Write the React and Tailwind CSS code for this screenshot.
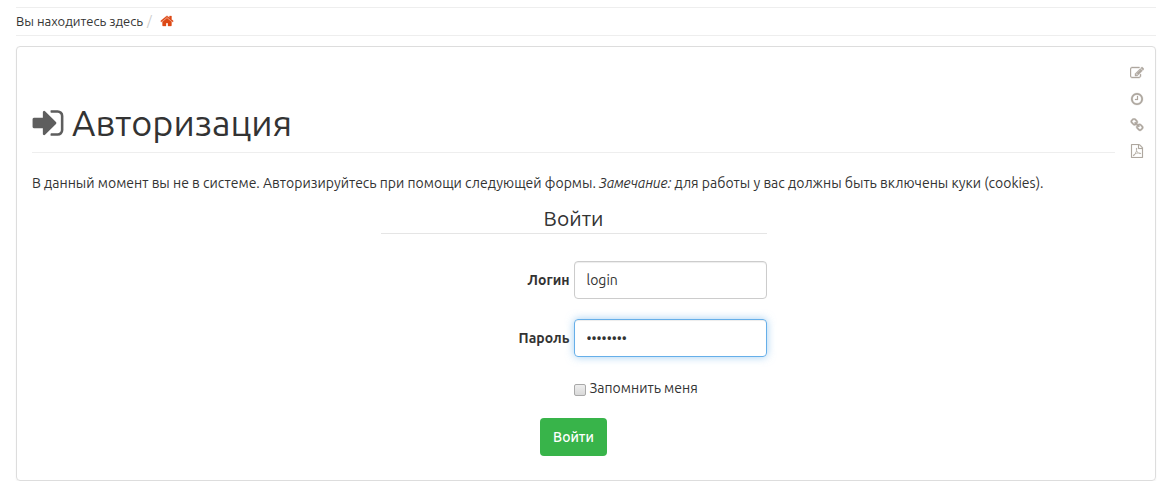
import React, { useState } from 'react';

// Font Awesome 4 glyphs on the 1792 grid
const ICONS = {
  home: 'M1472 992v480q0 26-19 45t-45 19h-384v-384h-256v384h-384q-26 0-45-19t-19-45v-480q0-1 .5-3t.5-3l575-474 575 474q1 2 1 6zm223-69l-62 74q-8 9-21 11h-3q-13 0-21-7l-692-577-692 577q-12 8-24 7-13-2-21-11l-62-74q-8-10-7-23.5t11-21.5l719-599q32-26 76-26t76 26l244 204v-195q0-14 9-23t23-9h192q14 0 23 9t9 23v408l219 182q10 8 11 21.5t-7 23.5z',
  signIn: 'M1312 896q0 26-19 45l-544 544q-19 19-45 19t-45-19-19-45v-288h-448q-26 0-45-19t-19-45v-384q0-26 19-45t45-19h448v-288q0-26 19-45t45-19 45 19l544 544q19 19 19 45zm352-352v704q0 119-84.5 203.5t-203.5 84.5h-320q-13 0-22.5-9.5t-9.5-22.5q0-4-1-20t-.5-26.5 3-23.5 10-19.5 20.5-6.5h320q66 0 113-47t47-113v-704q0-66-47-113t-113-47h-312l-11.5-1-11.5-3-8-5.5-7-9-2-13.5q0-4-1-20t-.5-26.5 3-23.5 10-19.5 20.5-6.5h320q119 0 203.5 84.5t84.5 203.5z',
  edit: 'M888 1184l116-116-152-152-116 116v56h96v96h56zm440-720q-16-16-33 1l-350 350q-17 17-1 33t33-1l350-350q17-17 1-33zm80 594v190q0 119-84.5 203.5t-203.5 84.5h-832q-119 0-203.5-84.5t-84.5-203.5v-832q0-119 84.5-203.5t203.5-84.5h832q63 0 117 25 15 7 18 23 3 17-9 29l-49 49q-14 14-32 8-23-6-45-6h-832q-66 0-113 47t-47 113v832q0 66 47 113t113 47h832q66 0 113-47t47-113v-126q0-13 9-22l64-64q15-15 35-7t20 29zm-96-738l288 288-672 672h-288v-288zm444 132l-92 92-288-288 92-92q28-28 68-28t68 28l152 152q28 28 28 68t-28 68z',
  clock: 'M1024 544v448q0 14-9 23t-23 9h-320q-14 0-23-9t-9-23v-64q0-14 9-23t23-9h224v-352q0-14 9-23t23-9h64q14 0 23 9t9 23zm416 352q0-148-73-273t-198-198-273-73-273 73-198 198-73 273 73 273 198 198 273 73 273-73 198-198 73-273zm224 0q0 209-103 385.5t-279.5 279.5-385.5 103-385.5-103-279.5-279.5-103-385.5 103-385.5 279.5-279.5 385.5-103 385.5 103 279.5 279.5 103 385.5z',
  link: 'M1520 1216q0-40-28-68l-208-208q-28-28-68-28-42 0-72 32 3 3 19 18.5t21.5 21.5 15 19 13 25.5 3.5 27.5q0 40-28 68t-68 28q-15 0-27.5-3.5t-25.5-13-19-15-21.5-21.5-18.5-19q-33 31-33 73 0 40 28 68l206 207q27 27 68 27 40 0 68-26l147-146q28-28 28-67zm-703-705q0-40-28-68l-206-207q-28-28-68-28-39 0-68 27l-147 146q-28 28-28 67 0 40 28 68l208 208q27 27 68 27 42 0 72-31-3-3-19-18.5t-21.5-21.5-15-19-13-25.5-3.5-27.5q0-40 28-68t68-28q15 0 27.5 3.5t25.5 13 19 15 21.5 21.5 18.5 19q33-31 33-73zm895 705q0 120-85 203l-147 146q-83 83-203 83-121 0-204-85l-206-207q-83-83-83-203 0-123 88-209l-88-88q-86 88-208 88-120 0-204-84l-208-208q-84-84-84-204t85-203l147-146q83-83 203-83 121 0 204 85l206 207q83 83 83 203 0 123-88 209l88 88q86-88 208-88 120 0 204 84l208 208q84 84 84 204z',
  pdf: 'M1596 380q28 28 48 76t20 88v1152q0 40-28 68t-68 28h-1344q-40 0-68-28t-28-68v-1600q0-40 28-68t68-28h896q40 0 88 20t76 48zm-444-244v376h376q-10-29-22-41l-313-313q-12-12-41-22zm384 1528v-1024h-416q-40 0-68-28t-28-68v-416h-768v1536h1280zm-514-593q33 26 84 56 59-7 117-7 147 0 177 49 16 22 2 52 0 1-1 2l-2 2v1q-6 38-71 38-48 0-115-20t-130-53q-221 24-392 83-153 262-242 262-15 0-28-7l-24-12q-1-1-6-5-10-10-6-36 9-40 56-91.5t132-96.5q14-9 23 6 2 2 2 4 52-85 107-197 68-136 104-262-24-82-30.5-159.5t6.5-127.5q11-40 42-40h22q23 0 35 15 18 21 9 68-2 6-4 8 1 3 1 8v30q-2 123-14 192 55 164 146 238zm-576 411q52-24 137-158-51 40-87.5 84t-49.5 74zm398-920q-15 42-2 132 1-7 7-44 0-3 7-43 1-4 4-8-1-1-1-2t-1-2q-1-22-13-36 0 1-1 2v2zm-124 661q135-54 284-81-2-1-13-9.5t-16-13.5q-76-67-127-176-27 86-83 197-30 56-45 83zm646-16q-24-24-140-24 76 28 124 28 14 0 18-1 0-1-2-3z',
};

const TOOLS = [
  { icon: 'edit', width: 'stroke-[50]' },
  { icon: 'clock', width: 'stroke-[30]' },
  { icon: 'link', width: 'stroke-[50]' },
  { icon: 'pdf', width: 'stroke-[20]' },
];

function Icon({ name, className }) {
  return (
    <svg viewBox="0 0 1792 1792" fill="currentColor" aria-hidden="true" className={className}>
      <path d={ICONS[name]} />
    </svg>
  );
}

function App() {
  const [login, setLogin] = useState('login');
  const [password, setPassword] = useState('password');
  const [remember, setRemember] = useState(false);

  return (
    <div className="pt-[7px] pl-4 pr-5 font-['Ubuntu','Noto_Sans',sans-serif] text-sm leading-5 text-[#333]">
      {/* Breadcrumbs */}
      <nav className="flex items-center border-y border-[#eee] h-[29px] pb-[2px] text-[13px]">
        <span>Вы находитесь здесь</span>
        <span className="ml-1 text-[#ccc]">/</span>
        <a href="#" className="ml-2 text-[#dd4814]">
          <Icon name="home" className="size-[14px] stroke-current stroke-[40]" />
        </a>
      </nav>

      <main className="mt-[10px] flex rounded border border-[#ddd] shadow-xs pl-[15px] pr-[11px] pb-6">
        <div className="flex-1 min-w-0">
          <h1 className="mt-[54px] flex items-center border-b border-[#eee] pb-[7px] text-4xl leading-11">
            <Icon name="signIn" className="size-9 -ml-[2px] mr-[6px] text-[#5e5e5e]" />
            Авторизация
          </h1>
          <p className="mt-5">
            В данный момент вы не в системе. Авторизируйтесь при помощи следующей формы. <em>Замечание:</em> для
            работы у вас должны быть включены куки (cookies).
          </p>

          <form className="mx-auto mt-3 max-w-[386px]" onSubmit={(e) => e.preventDefault()}>
            <h2 className="border-b border-[#e5e5e5] pb-[2px] text-center text-[21px] leading-[26px]">Войти</h2>
            <div className="mt-[27px] flex items-center justify-end gap-1">
              <label htmlFor="login" className="font-bold">Логин</label>
              <input
                id="login"
                type="text"
                value={login}
                onChange={(e) => setLogin(e.target.value)}
                className="h-[38px] w-1/2 rounded border border-[#ccc] px-3 shadow-[inset_0_1px_1px_rgba(0,0,0,0.075)] outline-none"
              />
            </div>
            <div className="mt-5 flex items-center justify-end gap-1">
              <label htmlFor="password" className="font-bold">Пароль</label>
              <input
                id="password"
                type="password"
                value={password}
                onChange={(e) => setPassword(e.target.value)}
                className="h-[38px] w-1/2 rounded border border-[#66afe9] px-3 shadow-[inset_0_1px_1px_rgba(0,0,0,0.075),0_0_8px_rgba(102,175,233,0.6)] outline-none"
              />
            </div>
            <label className="ml-[50%] mt-[21px] flex items-center gap-1">
              <input
                type="checkbox"
                checked={remember}
                onChange={(e) => setRemember(e.target.checked)}
                className="mt-1 size-3 appearance-none rounded-xs border border-[#a9a9a9] bg-linear-to-b from-[#eee] to-[#d9d9d9] checked:from-[#555] checked:to-[#555]"
              />
              Запомнить меня
            </label>
            <div className="mt-5 flex justify-center">
              <button type="submit" className="rounded bg-[#38b44a] px-[13px] py-[9px] font-medium text-white">
                Войти
              </button>
            </div>
          </form>
        </div>

        {/* Page tools */}
        <aside className="ml-[15px] mt-[19px] flex flex-col gap-3">
          {TOOLS.map(({ icon, width }) => (
            <a key={icon} href="#" className="text-[#aea79f]">
              <Icon name={icon} className={`size-[14px] stroke-current ${width}`} />
            </a>
          ))}
        </aside>
      </main>
    </div>
  );
}

export default App;
